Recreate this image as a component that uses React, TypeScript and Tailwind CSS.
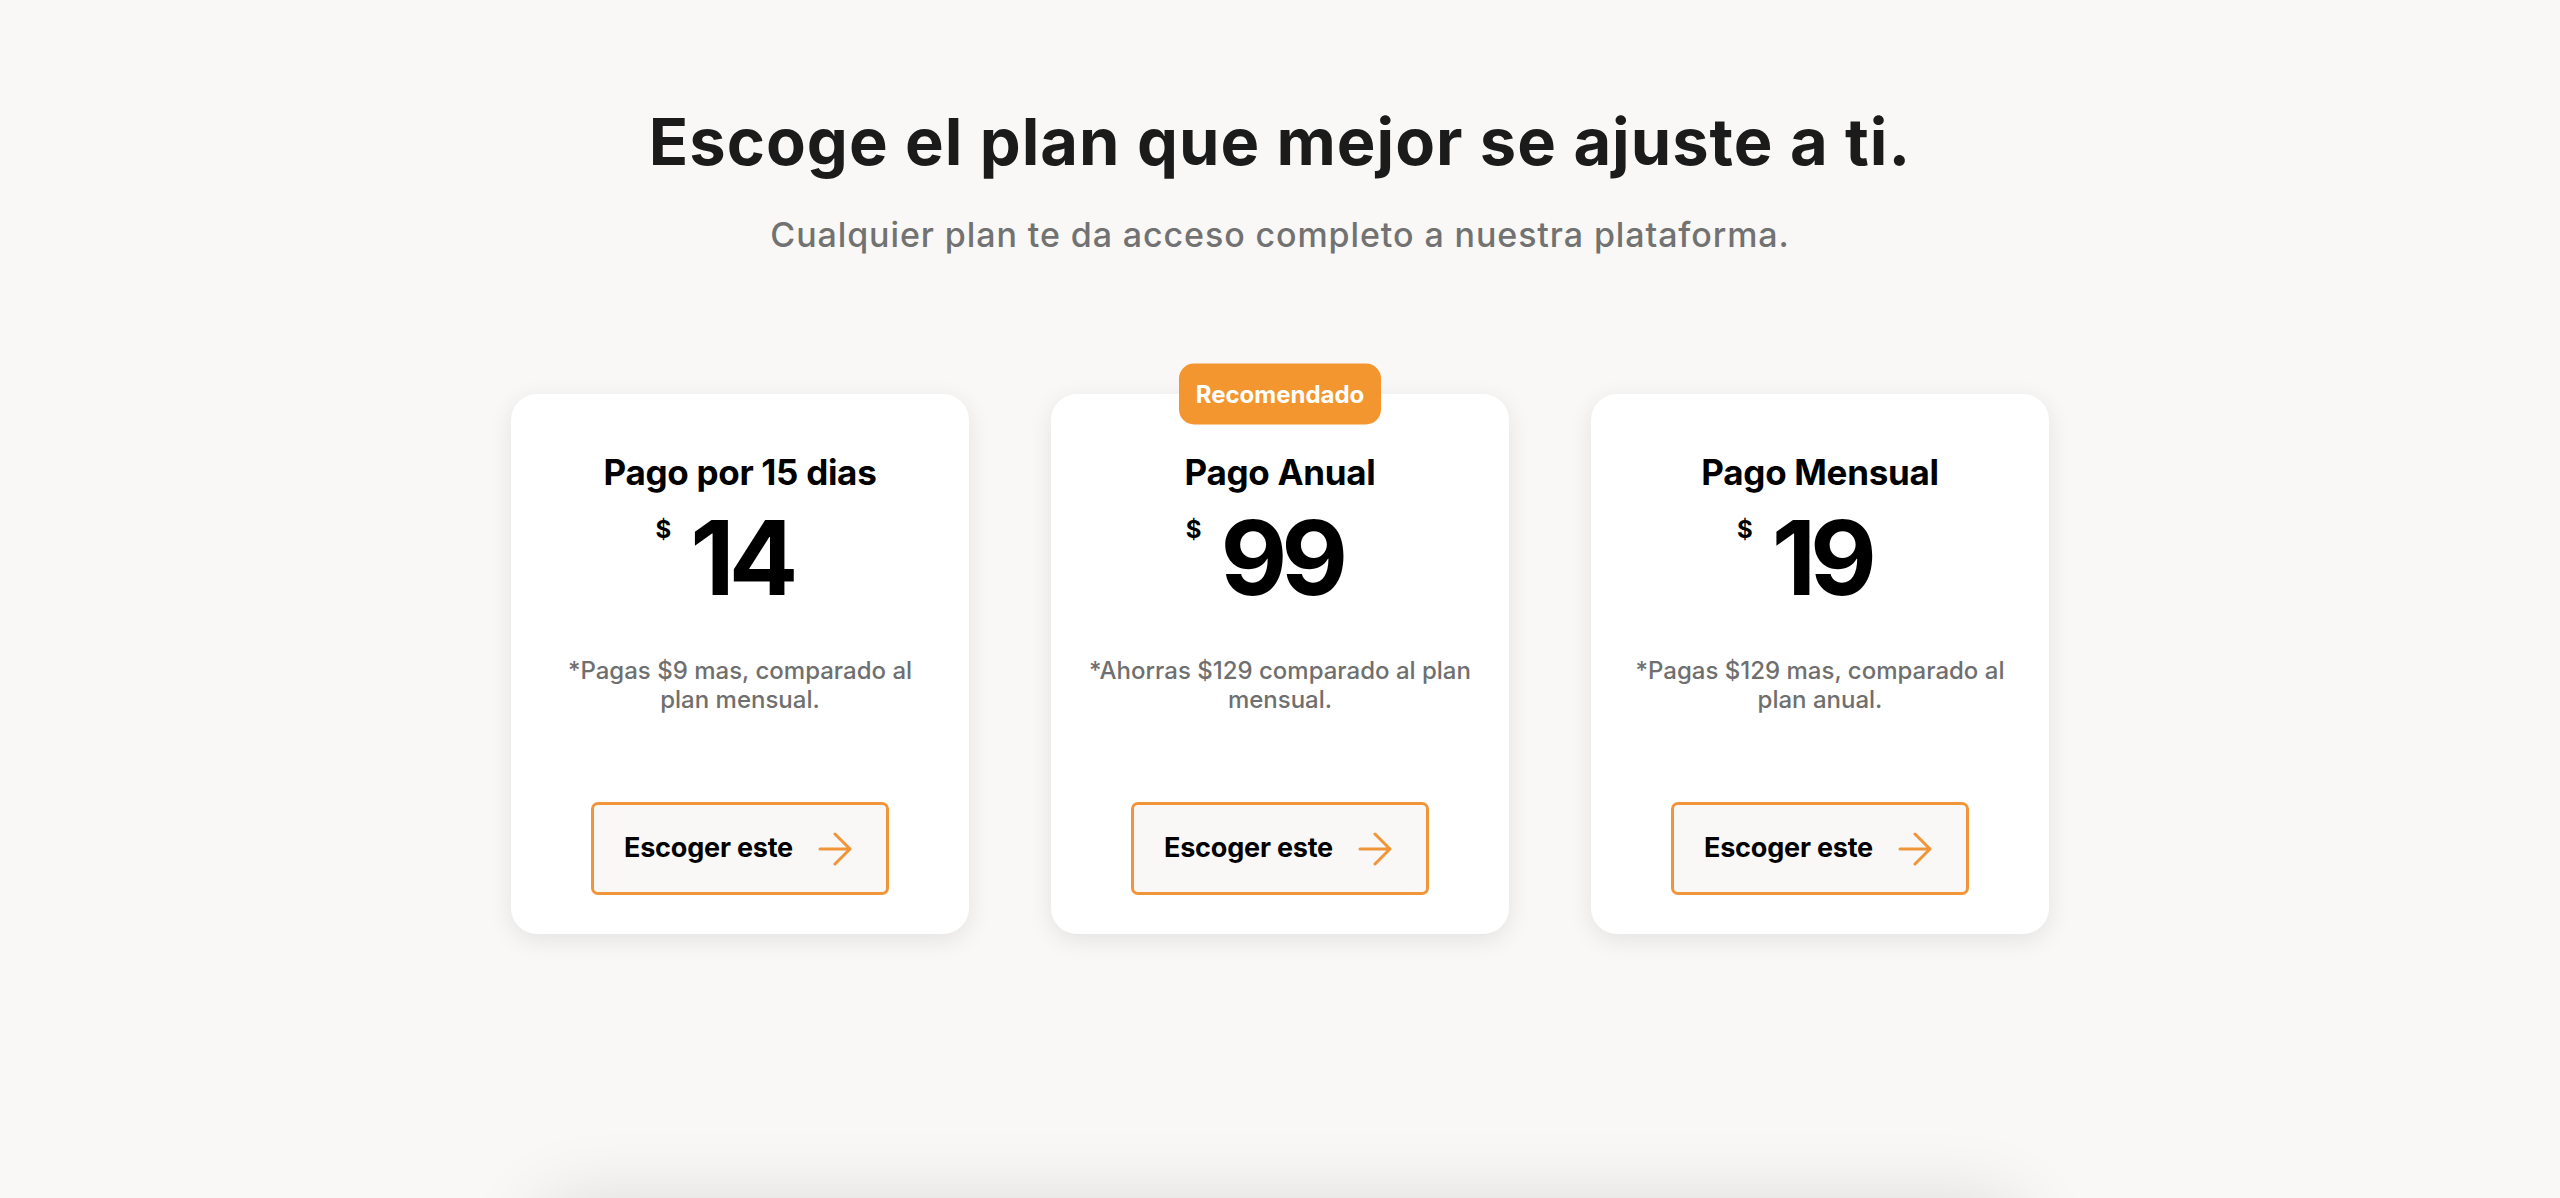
import React from "react";

const plans = [
  {
    name: "Pago por 15 dias",
    price: "14",
    note: "*Pagas $9 mas, comparado al plan mensual.",
    recommended: false,
  },
  {
    name: "Pago Anual",
    price: "99",
    note: "*Ahorras $129 comparado al plan mensual.",
    recommended: true,
  },
  {
    name: "Pago Mensual",
    price: "19",
    note: "*Pagas $129 mas, comparado al plan anual.",
    recommended: false,
  },
];

function Arrow() {
  return (
    <svg width="34" height="34" viewBox="0 0 34 34" fill="none">
      <path
        d="M2 17H32M17 2L32 17L17 32"
        stroke="#F0953A"
        strokeWidth="3"
        strokeLinecap="round"
        strokeLinejoin="round"
      />
    </svg>
  );
}

function PlanCard({ plan }: { plan: (typeof plans)[number] }) {
  return (
    <div className="relative flex h-[540px] w-[458px] flex-col items-center rounded-[26px] bg-white pt-[56px] pb-[39px] shadow-[0_6px_24px_rgba(0,0,0,0.09)]">
      {plan.recommended && (
        <div className="absolute top-0 left-1/2 flex h-[61px] w-[202px] -translate-x-1/2 -translate-y-1/2 items-center justify-center rounded-[15px] bg-[#F4962F] font-['Inter',sans-serif] text-[24px] font-bold text-white">
          Recomendado
        </div>
      )}
      <h2 className="font-['Inter',sans-serif] text-[35px] leading-[44px] font-bold tracking-[-0.3px] text-black">
        {plan.name}
      </h2>
      <div className="mt-[12px] flex items-start gap-[19px] pr-[32px]">
        <span className="mt-[12px] font-['Inter',sans-serif] text-[24px] leading-[24px] font-bold text-black">
          $
        </span>
        <span className="font-['Inter',sans-serif] text-[103px] leading-[103px] font-bold tracking-[-6px] text-black">
          {plan.price}
        </span>
      </div>
      <p className="mt-[47px] w-[392px] text-center font-['Inter',sans-serif] text-[24px] leading-[29px] font-medium text-[#6f6f6f]">
        {plan.note}
      </p>
      <button className="mt-auto flex h-[93px] w-[298px] items-center justify-center gap-[25px] rounded-[7px] border-[3px] border-[#F0953A] bg-[#f9f8f6] pr-[4px]">
        <span className="font-['Inter',sans-serif] text-[27px] font-bold tracking-[-0.2px] text-black">
          Escoger este
        </span>
        <Arrow />
      </button>
    </div>
  );
}

export default function App() {
  return (
    <div className="min-h-screen overflow-hidden bg-[#f9f8f6]">
      <div className="flex flex-col items-center pt-[103px]">
        <h1 className="font-['Inter',sans-serif] text-[65px] leading-[78px] font-bold tracking-[1px] text-[#1b1b1b]">
          Escoge el plan que mejor se ajuste a ti.
        </h1>
        <p className="mt-[33px] font-['Inter',sans-serif] text-[34px] leading-[42px] font-medium tracking-[0.9px] text-[#727272]">
          Cualquier plan te da acceso completo a nuestra plataforma.
        </p>
        <div className="mt-[138px] flex gap-[82px]">
          {plans.map((p) => (
            <PlanCard key={p.name} plan={p} />
          ))}
        </div>
        <div className="mt-[272px] h-[400px] w-[1480px] rounded-[30px] bg-white shadow-[0_0_80px_rgba(0,0,0,0.14)]" />
      </div>
    </div>
  );
}
